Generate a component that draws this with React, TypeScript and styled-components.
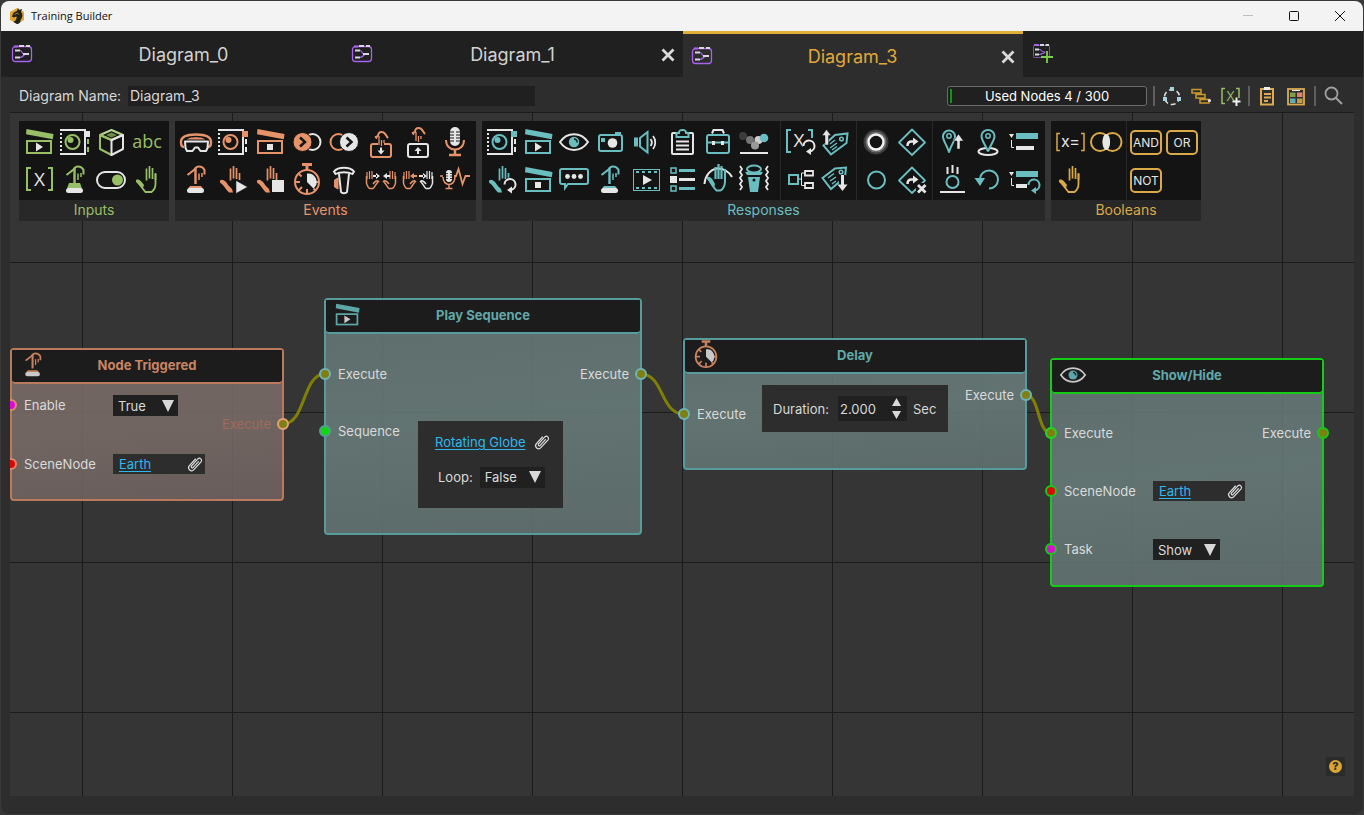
import React, { useState } from "react";
import styled, { createGlobalStyle } from "styled-components";

const GREEN = "#98be66";
const ORANGE = "#e6936a";
const TEAL = "#6abec0";
const GOLD = "#dba947";
const WHITE = "#e6e6e6";
const PURPLE = "#a862f0";
const INK = "#141414";

const Global = createGlobalStyle`
  *, *::before, *::after { box-sizing: border-box; }
  body {
    margin: 0;
    background: #383838;
    color: #d8d8d8;
    font: 13px/20px Inter, "Liberation Sans", sans-serif;
  }
  button, input, select { font: inherit; color: inherit; margin: 0; padding: 0; border: 0; border-radius: 0; background: none; }
  svg { display: block; overflow: visible; }
`;

/* ---------- icons ---------- */

type Tone = { c: string };

const Svg = ({ size = 30, children }: { size?: number; children: React.ReactNode }) => (
  <svg width={size} height={size} viewBox={`0 0 ${size} ${size}`} fill="none" aria-hidden="true">
    {children}
  </svg>
);

const Slate = ({ c, stop }: Tone & { stop?: boolean }) => (
  <Svg>
    <path d="M2.5 2 29.5 7 28.8 12.3 2 7.3Z" fill={c} />
    <rect x="3" y="14" width="24" height="12" stroke={c} strokeWidth="2" />
    {stop ? <rect x="12" y="17" width="6" height="6" fill={WHITE} /> : <path d="M12 15.5 19 20 12 24.5Z" fill={WHITE} />}
  </Svg>
);

const SceneEye = ({ c, corner = c, dash = WHITE }: Tone & { corner?: string; dash?: string }) => (
  <Svg>
    <path d="M0 3H25V27H0" stroke={WHITE} strokeWidth="2" />
    <path d="M1 6V26" stroke={WHITE} strokeWidth="2" strokeDasharray="2 2" />
    <path d="M28 12V28" stroke={dash} strokeWidth="2" strokeDasharray="5 3" />
    <rect x="24" y="4" width="6" height="6" fill={corner} />
    <circle cx="12.5" cy="15" r="7" stroke={c} strokeWidth="2" />
    <circle cx="10.5" cy="13" r="3" fill={c} />
  </Svg>
);

const Cube = ({ c }: Tone) => (
  <Svg>
    <path d="M4 8 15.5 3 27 8 15.5 13Z" stroke="#b9d394" strokeWidth="2" strokeLinejoin="round" />
    <path d="M10 8 15.5 5.5 21 8 15.5 10.5Z" fill="#6c8a47" />
    <path d="M15.5 28 4 22V8L15.5 13" stroke={c} strokeWidth="2" strokeLinejoin="round" />
    <path d="M15.5 13 27 8V22L15.5 28Z" stroke={WHITE} strokeWidth="2" strokeLinejoin="round" />
  </Svg>
);

const Abc = ({ c }: Tone) => (
  <Svg>
    <text x="15" y="21" fill={c} textAnchor="middle" fontSize="18" fontFamily='"Open Sans", sans-serif'>abc</text>
  </Svg>
);

const Brackets = ({ c }: Tone) => (
  <Svg>
    <path d="M7 3H3V25H7M24 3H28V25H24" stroke={c} strokeWidth="2" />
    <text x="15.5" y="21" fill={WHITE} textAnchor="middle" fontSize="19" fontFamily='"Open Sans", sans-serif'>X</text>
  </Svg>
);

const Finger = ({ c }: Tone) => (
  <g stroke={c}>
    <path d="M6.5 10 13.500 4.500C14.500 2.500 16 1.500 18 1.500 21 1.500 22.500 3 23.500 5V9.500" strokeWidth="2" />
    <path d="M14.500 3V19" strokeWidth="2.400" />
    <path d="M18 8.500V15M21 8V12" strokeWidth="1.500" />
  </g>
);

const Trigger = ({ c, wide }: Tone & { wide?: boolean }) => (
  <Svg>
    <Finger c={c} />
    {wide ? <path d="M9 18H20L22 23.5H7Z" fill={c} /> : <path d="M9 21H20L22 23.5H7Z" fill={c} />}
    <rect x="6" y="23" width="17" height="5" rx="2.5" fill={WHITE} />
  </Svg>
);

const Toggle = ({ c }: Tone) => (
  <Svg>
    <rect x="1" y="7" width="28" height="16" rx="8" stroke={WHITE} strokeWidth="2" />
    <circle cx="21.5" cy="15" r="5.5" fill={c} />
  </Svg>
);

const Fingers = ({ c, dx = 0 }: Tone & { dx?: number }) => (
  <path d="M14.5 3.5V15.5M17.500 1V13.500M20.500 3V14M23.500 8V15" stroke={c} strokeWidth="1.7" transform={`translate(${dx} 0)`} />
);

const Hand = ({ c }: Tone) => (
  <Svg>
    <Fingers c={c} />
    <path d="M23.5 9V19C23.5 23 21.500 25.500 19.500 27H13.500C11 24.500 9.500 21 5 16.500" stroke={c} strokeWidth="1.8" />
    <path d="M4 15C6.500 13.500 9 15.500 12 20L11 23 9 22C7.500 19.500 6 18 4 17Z" fill={c} />
  </Svg>
);

const HandThumb = ({ c }: Tone) => (
  <>
    <Fingers c={c} dx={-2} />
    <path d="M2 15.5C5 13.5 7.5 16 10.5 20.5L14 24 15 27.5H11C8 25 6 20 2 17.5Z" fill={c} />
  </>
);

const HandPlay = ({ c }: Tone) => (
  <Svg>
    <HandThumb c={c} />
    <path d="M18 15.5 29.5 22 18 28.5Z" fill={WHITE} stroke={INK} strokeWidth="0.5" />
  </Svg>
);

const HandStop = ({ c }: Tone) => (
  <Svg>
    <HandThumb c={c} />
    <rect x="17" y="15" width="12" height="12" fill={WHITE} />
  </Svg>
);

const Loop = ({ c, x, y }: Tone & { x: number; y: number }) => (
  <g transform={`translate(${x} ${y})`}>
    <path d="M-5.5 0A5.5 5.5 0 1 1 1 5.4" stroke={c} strokeWidth="2" />
    <path d="M-3 5.5 2 2V9Z" fill={c} />
  </g>
);

const HandLoop = ({ c }: Tone) => (
  <Svg>
    <HandThumb c={c} />
    <circle cx="23" cy="20" r="7.5" fill={INK} />
    <Loop c={WHITE} x={23} y={19.5} />
  </Svg>
);

const Headset = ({ c }: Tone) => (
  <Svg>
    <path d="M3 20C0 20 0 17 0 15 0 10 6 7.5 15 7.5S30 10 30 15C30 17 30 20 27 20" stroke={c} strokeWidth="2.5" />
    <path d="M6 12.5C8 9.5 22 9.5 24 12.5Z" fill={c} />
    <path d="M4 14.5H27L26.5 21 25 24H19.5L17 20.5H14L11.5 24H6L4.5 21Z" stroke={WHITE} strokeWidth="2" strokeLinejoin="round" />
  </Svg>
);

const EnterCircle = ({ c, flip }: Tone & { flip?: boolean }) =>
  flip ? (
    <Svg>
      <circle cx="9.5" cy="15" r="8" stroke={c} strokeWidth="2" />
      <circle cx="20" cy="15" r="9.5" fill={WHITE} stroke={INK} />
      <path d="M17.5 10.5 22.5 15 17.5 19.5" stroke={INK} strokeWidth="2.5" />
    </Svg>
  ) : (
    <Svg>
      <circle cx="20.5" cy="15" r="8" stroke={WHITE} strokeWidth="2" />
      <circle cx="10.5" cy="15" r="9.5" fill={c} stroke={INK} />
      <path d="M8 10.5 13 15 8 19.5" stroke={INK} strokeWidth="2.5" />
    </Svg>
  );

const GrabBox = ({ c, up }: Tone & { up?: boolean }) => (
  <Svg>
    <rect x="5" y="17" width="20" height="13" rx="2" stroke={up ? WHITE : c} strokeWidth="2" />
    <rect x="12" y="15" width="6" height="4" fill={up ? "none" : INK} />
    <g transform={up ? "translate(0 -4)" : undefined} stroke={c}>
      <path d="M9 10.5 12 9C12 6 14 4.5 16 5 19 5 19.5 8 22 11" strokeWidth="2" />
      <path d="M10.5 12V9M13 18V9M15.5 19V13M18 16V13" strokeWidth="1.3" />
    </g>
    {up ? (
      <path d="M11.5 24 15 20 18.5 24H16V27H14V24Z" fill={WHITE} />
    ) : (
      <path d="M11.5 23.5 15 27.5 18.5 23.5H16V20.5H14V23.5Z" fill={WHITE} />
    )}
  </Svg>
);

const Mic = ({ c }: Tone) => (
  <Svg>
    <rect x="10" y="0" width="10" height="19" rx="5" fill={WHITE} />
    <path d="M10 5H14M16 5H20M10 8H14M16 8H20M10 11H14M16 11H20M10 14H14M16 14H20" stroke={INK} />
    <path d="M6 13C6 19 10 22.5 15 22.5S24 19 24 13" stroke={c} strokeWidth="2" />
    <path d="M15 22V27M9 28H21" stroke={c} strokeWidth="2.5" />
  </Svg>
);

const Stopwatch = ({ c }: Tone) => (
  <Svg>
    <circle cx="15" cy="17" r="12" stroke={c} strokeWidth="2" />
    <path d="M10 -0.5H20M15 0V5" stroke={c} strokeWidth="3" />
    <path d="M15 24V29M3 17H8M22.5 17H27M6.5 8.5 9.5 11.5M6.5 25.5 10 22M23.5 25.5 21.5 23.5" stroke={c} strokeWidth="2" />
    <path d="M15 17V8.5A8.5 8.5 0 0 1 21.5 23.5Z" fill={WHITE} />
  </Svg>
);

const Lever = ({ c }: Tone) => (
  <Svg>
    <path d="M9 13 5.5 15V22L9 24Z" fill={c} stroke={c} />
    <path d="M5 6.5C9 1.5 21 1.5 25 6.5L23.5 9C19 6.500 11 6.5 6.5 9Z" fill={INK} stroke={WHITE} strokeWidth="2" />
    <path d="M10 9 12 27C13 28.5 17 28.5 18 27L20 9" fill={INK} stroke={WHITE} strokeWidth="2" />
  </Svg>
);

const SmallHand = ({ c, x, flip }: Tone & { x: number; flip?: boolean }) => (
  <g transform={`translate(${x} 0)${flip ? " scale(-1 1)" : ""}`} stroke={c}>
    <path d="M1 7V14M3.5 6V14M6 6V14" strokeWidth="1.2" />
    <path d="M0.5 11V18C1 21 3 23.5 4 23.5H7C9 22 10 18.5 12.5 16.5 11 14.5 8.5 17 7 19" strokeWidth="1.5" />
  </g>
);

const TwoHands = ({ c, apart }: Tone & { apart?: boolean }) => (
  <Svg>
    <SmallHand c={c} x={0} />
    <SmallHand c={apart ? WHITE : c} x={30} flip />
    {apart ? (
      <>
        <path d="M11 8V14L7 11ZM10 10H14V12H10Z" fill={c} />
        <path d="M20 8V14L24 11ZM16 10H21V12H16Z" fill={WHITE} />
      </>
    ) : (
      <path d="M10 8V14L14 11ZM7 10H11V12H7ZM21 8V14L17 11ZM20 10H24V12H20Z" fill={WHITE} />
    )}
  </Svg>
);

const MicWave = ({ c }: Tone) => (
  <Svg>
    <rect x="6" y="5" width="6" height="12" rx="3" fill={WHITE} />
    <path d="M6 8.5H8M10 8.5H12M6 11H8M10 11H12M6 13.5H8M10 13.5H12" stroke={INK} strokeWidth="0.8" />
    <path d="M3 12C3 17 6 19.5 9 19.5S15 17 15 12M9 19V23M5.5 23.5H12.5M0 11H3" stroke={c} strokeWidth="1.5" />
    <path d="M14 11H16L18.5 4 22.5 19 25.5 11H30" stroke={c} strokeWidth="1.8" />
  </Svg>
);

const Eye = ({ c }: Tone) => (
  <Svg>
    <path d="M1 15C8 4.5 22 4.5 29 15 22 25.500 8 25.500 1 15Z" stroke={WHITE} strokeWidth="2" />
    <circle cx="15" cy="15" r="5.2" fill={c} />
    <path d="M15 12A3 3 0 0 1 18 15.5" stroke={INK} strokeWidth="1.5" />
  </Svg>
);

const Camera = ({ c }: Tone) => (
  <Svg>
    <rect x="4" y="8" width="23" height="16" rx="2" stroke={c} strokeWidth="2" />
    <rect x="20" y="5" width="6" height="2" fill={c} />
    <rect x="6" y="11" width="4" height="4" fill={c} />
    <circle cx="17.5" cy="16" r="4.8" fill={WHITE} />
  </Svg>
);

const Speaker = ({ c }: Tone) => (
  <Svg>
    <rect x="3" y="10.5" width="4" height="9" fill={c} />
    <path d="M9 11 16.5 5V25.5L9 19.5Z" stroke={c} strokeWidth="2" />
    <path d="M19.5 12C21 14 21 17 19.5 19M22 9C25 12.5 25 18.5 22 22" stroke={WHITE} strokeWidth="1.8" />
  </Svg>
);

const Clipboard = ({ c }: Tone) => (
  <Svg>
    <rect x="5" y="6" width="21" height="21" rx="1" stroke={WHITE} strokeWidth="2" />
    <path d="M9.5 10V6H12C12 3 13.5 3 15.5 3S19 3 19 6H21.5V10Z" fill={INK} stroke={c} strokeWidth="2" />
    <path d="M9 14.5H22M9 18.5H22M9 22.5H22" stroke={WHITE} strokeWidth="1.8" />
  </Svg>
);

const Toolbox = ({ c }: Tone) => (
  <Svg>
    <path d="M9 6.5 10.5 3H19.5L21 6.5" stroke={WHITE} strokeWidth="2" />
    <rect x="4" y="8" width="22" height="18" rx="2" stroke={c} strokeWidth="2" />
    <path d="M4 15.5H26" stroke={c} strokeWidth="2" />
    <rect x="9" y="14" width="3" height="4" fill={WHITE} />
    <rect x="18" y="14" width="3" height="4" fill={WHITE} />
  </Svg>
);

const Balls = ({ c }: Tone) => (
  <Svg>
    <circle cx="4" cy="9" r="4" fill="#3c3c3c" />
    <circle cx="11" cy="13" r="4" fill="#757575" />
    <circle cx="19.5" cy="13" r="4" fill="#cfcfcf" />
    <circle cx="16" cy="18.5" r="4" fill="#989898" />
    <circle cx="25" cy="11" r="4.3" fill={c} />
    <path d="M1 26H29" stroke={WHITE} strokeWidth="2" />
  </Svg>
);

const Speech = ({ c }: Tone) => (
  <Svg>
    <path d="M3 4H27Q29 4 29 6V17Q29 19 27 19H9L6 23V19H3Q1 19 1 17V6Q1 4 3 4Z" stroke={c} strokeWidth="2" />
    <circle cx="8.5" cy="11.5" r="2.4" fill={WHITE} />
    <circle cx="15" cy="11.5" r="2.4" fill={WHITE} />
    <circle cx="21.5" cy="11.5" r="2.4" fill={WHITE} />
  </Svg>
);

const Film = ({ c }: Tone) => (
  <Svg>
    <rect x="2.5" y="4.5" width="26" height="21" stroke={c} />
    <path d="M5 7H27M5 23H27" stroke={c} strokeWidth="2" strokeDasharray="3 3" />
    <path d="M12 10 21 15 12 20Z" fill={WHITE} />
  </Svg>
);

const Checklist = ({ c }: Tone) => (
  <Svg>
    <path d="M4 3H9V8H4ZM4 21H9V26H4Z" stroke={c} strokeWidth="1.5" />
    <path d="M12 5.5H28M12 23.5H28" stroke={c} strokeWidth="3" />
    <path d="M12 14.5H28" stroke={WHITE} strokeWidth="3" />
    <rect x="3" y="11" width="7" height="7" fill={WHITE} />
  </Svg>
);

const HandArc = ({ c }: Tone) => (
  <Svg>
    <path d="M1.5 19C2 11 7 4.5 14 3.5 20 3 26 6.5 29 12" stroke={WHITE} strokeWidth="2" />
    <path d="M12.5 2V14M15.5 -1V14M18.5 1V14" stroke={c} strokeWidth="2.2" />
    <path d="M4 12C7.500 11 9.500 14 12 19L11 23C9 20 7 17 4 14Z" fill={c} />
    <path d="M22 4V16C22 20 20 24 17.500 25.5H13.500C11 23.500 8 18 5 13.500" stroke={c} strokeWidth="2" />
  </Svg>
);

const ShakeBin = ({ c }: Tone) => (
  <Svg>
    <path d="M1 1 3 4 1 7 3 10 1 13 3 16 1 19 3 22 1 25M29 1 27 4 29 7 27 10 29 13 27 16 29 19 27 22 29 25" stroke={WHITE} strokeWidth="1.8" />
    <ellipse cx="15" cy="4" rx="7" ry="3.5" stroke={c} strokeWidth="2" />
    <path d="M6 7H24L22 10H8Z" fill={c} />
    <path d="M9 12H21L19 27H11Z" fill={c} />
    <circle cx="15" cy="15" r="1.5" fill={INK} />
  </Svg>
);

const BracketsLoop = ({ c }: Tone) => (
  <Svg>
    <path d="M6 3H2V25H6M23 3H27V11" stroke={c} strokeWidth="2" />
    <text x="14" y="20" fill={WHITE} textAnchor="middle" fontSize="19" fontFamily='"Open Sans", sans-serif'>X</text>
    <circle cx="24" cy="19" r="6.5" fill={INK} />
    <Loop c={WHITE} x={24} y={19} />
  </Svg>
);

const Tag = ({ c, down }: Tone & { down?: boolean }) => (
  <Svg>
    {down ? (
      <>
        <path d="M1.5 13 14 3.5 25 2.5 24 12 10 24Z" stroke={c} strokeWidth="2" />
        <circle cx="20" cy="7" r="1.8" stroke={c} strokeWidth="1.5" />
        <path d="M7 13 13 8.5M9 16 15 12M11 19 15 16" stroke={c} strokeWidth="1.5" />
        <rect x="18" y="10" width="7" height="10" fill={INK} />
        <path d="M16.5 19.5H20V10H23V19.5H26.5L21.5 26Z" fill={WHITE} />
      </>
    ) : (
      <>
        <path d="M2.5 18.5 14 8 26.5 6.5 25.5 16 10 27.5Z" stroke={c} strokeWidth="2" />
        <circle cx="20.5" cy="12" r="1.8" stroke={c} strokeWidth="1.5" />
        <path d="M9 17 14 13M9 21 16 16M11 23 16 19.5" stroke={c} strokeWidth="1.5" />
        <path d="M1 8.5 5.5 2.5 10 8.5H7.5V18H4V8.5Z" fill={WHITE} stroke={INK} strokeWidth="0.5" />
      </>
    )}
  </Svg>
);

const Tree = ({ c }: Tone) => (
  <Svg>
    <path d="M13 14H16M20 8H16.5V20.5H20" stroke={WHITE} />
    <rect x="4" y="10" width="9" height="9" stroke={c} strokeWidth="2" />
    <path d="M20 6H28V10.5H20ZM20 18H28V23H20Z" stroke={WHITE} strokeWidth="1.8" />
  </Svg>
);

const Glow = () => (
  <Svg>
    <circle cx="15" cy="15" r="12.5" fill="#3d3d3d" />
    <circle cx="15" cy="15" r="10.5" fill="#6e6e6e" />
    <circle cx="15" cy="15" r="7.5" fill={INK} stroke="#f2f2f2" strokeWidth="2.5" />
  </Svg>
);

const Ring = ({ c }: Tone) => (
  <Svg>
    <circle cx="15.5" cy="15" r="8.5" stroke={c} strokeWidth="2" />
  </Svg>
);

const Detour = ({ c, cancel }: Tone & { cancel?: boolean }) => (
  <Svg>
    <path d="M15 2.5 28 15.5 15 28 2 15.5Z" stroke={c} strokeWidth="1.8" strokeLinejoin="round" />
    <path d="M10.5 19C10.5 16 11.5 14.5 14.5 14.5H16.500" stroke={WHITE} strokeWidth="2.5" />
    <path d="M16 10.5 21.500 14.500 16 18.5Z" fill={WHITE} />
    {cancel && (
      <>
        <rect x="19" y="18" width="11" height="11" fill={INK} />
        <path d="M21 20 28.5 27.5M28.5 20 21 27.5" stroke={WHITE} strokeWidth="2.8" />
      </>
    )}
  </Svg>
);

const PinUp = ({ c }: Tone) => (
  <Svg>
    <path d="M12 25.5C11 20 6 14 6 9.5A6 6 0 0 1 18 9.5C18 14 13 20 12 25.5Z" stroke={c} strokeWidth="2" />
    <circle cx="12" cy="9" r="2.2" stroke={c} strokeWidth="1.5" />
    <path d="M16.5 14 21.5 7 26.5 14H23V22H20V14Z" fill={WHITE} stroke={INK} strokeWidth="0.5" />
  </Svg>
);

const PinSpot = ({ c }: Tone) => (
  <Svg>
    <ellipse cx="15" cy="24.5" rx="9.5" ry="3.5" stroke={WHITE} strokeWidth="2" />
    <path d="M15 24.5C14 20 8.5 14 8.5 9A6.5 6 0 0 1 21.5 9C21.5 14 16 20 15 24.5Z" fill={INK} stroke={c} strokeWidth="2" />
    <circle cx="15" cy="9" r="2.2" stroke={c} strokeWidth="1.5" />
  </Svg>
);

const Steps = ({ c, loop }: Tone & { loop?: boolean }) => (
  <Svg>
    <path d="M0 7H5L2.5 11Z" fill={WHITE} />
    <path d="M2.5 13V20.5H5" stroke={WHITE} />
    <rect x="7" y="6" width="22" height="6" fill={c} />
    <rect x="7" y="19" width={loop ? 11 : 18} height="4" fill={WHITE} />
    {loop && <Loop c={c} x={25} y={20} />}
  </Svg>
);

const BallDrop = ({ c }: Tone) => (
  <Svg>
    <path d="M10.5 2V9M15.5 0V8M20.5 2V9" stroke={WHITE} strokeWidth="2" />
    <circle cx="15.5" cy="17" r="6" stroke={c} strokeWidth="2" />
    <path d="M3 27H28" stroke={WHITE} strokeWidth="2" />
  </Svg>
);

const Undo = ({ c }: Tone) => (
  <Svg>
    <path d="M7 14A9 9 0 1 1 16 23.5" stroke={c} strokeWidth="2" />
    <path d="M1.5 13H12L7 21Z" fill={c} />
  </Svg>
);

const Compare = ({ c }: Tone) => (
  <Svg>
    <path d="M5 6.5H2V23.5H5M26 6.5H29V23.5H26" stroke={c} strokeWidth="1.5" />
    <text x="15.500" y="20" fill={WHITE} textAnchor="middle" fontSize="16" fontFamily="Inter, sans-serif">x=</text>
  </Svg>
);

const Venn = ({ c }: Tone) => (
  <Svg>
    <circle cx="9" cy="15" r="9" stroke={c} strokeWidth="2" />
    <circle cx="21.5" cy="15" r="9" stroke={c} strokeWidth="2" />
    <ellipse cx="15.300" cy="15" rx="3.800" ry="8" fill={WHITE} />
  </Svg>
);

const Gate = ({ c, word }: Tone & { word: string }) => (
  <Svg>
    <rect x="0" y="4" width="30" height="23" rx="4" stroke={c} strokeWidth="2" />
    <text x="15" y="20" fill={WHITE} textAnchor="middle" fontSize="12" fontFamily="Inter, sans-serif">{word}</text>
  </Svg>
);

const DiagramIcon = ({ add }: { add?: boolean }) => (
  <Svg size={20}>
    <rect x="0.5" y="1.5" width={add ? 16 : 19} height={add ? 12 : 15} rx={add ? 1 : 3} stroke={PURPLE} strokeWidth={add ? 1 : 1.3} opacity={add ? 0.7 : 1} />
    <path d={add ? "M1 1H6" : "M2 1.500H6"} stroke={PURPLE} strokeWidth="2" />
    <path d={add ? "M7 1H11M12.5 1H16" : "M7 1H12M14 1H18"} stroke="#d8d8d8" strokeWidth="1.8" />
    <path d={add ? "M2 5.5H6M2 10.5H6" : "M3 5.500H8M3 12.500H8"} stroke="#d8d8d8" strokeWidth="1.8" />
    <path d={add ? "M6 5.5C9 5.5 8 8 11 8S8 10.5 6 10.5" : "M8 5.500C10 5.500 10 9 12 9S10 12.500 8 12.500"} stroke={PURPLE} strokeWidth="1.2" />
    {!add && <path d="M11 9H17" stroke="#d8d8d8" strokeWidth="1.8" />}
    {add && <path d="M14 7V19M8 13H20" stroke="#7ad14a" strokeWidth="1.8" />}
  </Svg>
);

const CrossIcon = () => (
  <Svg size={14}>
    <path d="M1.5 1.5 12.5 12.5M12.5 1.5 1.5 12.5" stroke="#dadada" strokeWidth="2.8" />
  </Svg>
);

const ClipIcon = () => (
  <Svg size={16}>
    <g transform="rotate(42 8 8)" stroke="#dedede" strokeWidth="1.2" strokeLinecap="round">
      <path d="M5 4V13A3 3 0 0 0 11 13V2A2.200 2.200 0 0 0 6.700 2V12A1.200 1.200 0 0 0 9 12V4" />
    </g>
  </Svg>
);

const LogoIcon = () => (
  <Svg size={16}>
    <path d="M8 0 15 4V12L8 16 1 12V4Z" fill="#e0a72e" />
    <path d="M9 0 10 2 13 1 12 4C14 6 14 9 11.5 12 12 14 10 16 8 16L4.5 14C7 12.5 8 10.5 7.5 8.5L4.5 9.5 3 8.5C3.5 5.5 5.5 3.5 8 3Z" fill="#222" />
    <path d="M5.5 6.5 8.5 5 9.5 6.5" stroke="#e0a72e" strokeWidth="0.7" />
  </Svg>
);

/* ---------- window frame ---------- */

const Window = styled.div`
  display: flex;
  flex-direction: column;
  min-height: calc(100vh - 2px);
  margin: 1px;
  border-radius: 8px;
  overflow: hidden;
  background: #2d2d2d;
`;

const TitleBar = styled.header`
  display: flex;
  align-items: center;
  height: 30px;
  padding-left: 8px;
  background: #f3f3f3;
  color: #111;
`;

const WindowTitle = styled.h1`
  flex: 1;
  margin: 0 0 0 6px;
  font: 400 11px/16px "Open Sans", "Noto Sans", sans-serif;
`;

const WindowButton = styled.button`
  display: grid;
  place-items: center;
  width: 46px;
  height: 30px;
`;

const TabBar = styled.nav`
  display: flex;
  align-items: stretch;
  height: 46px;
  padding-left: 2px;
  background: #202020;
`;

const Tab = styled.div<{ $active?: boolean }>`
  display: flex;
  align-items: center;
  flex: 0 1 340px;
  min-width: 0;
  padding: 2px 8px 0 9px;
  border-top: ${(p) => (p.$active ? "3px solid #e0b036" : "0")};
  background: ${(p) => (p.$active ? "#2d2d2d" : "transparent")};
`;

const TabLabel = styled.button<{ $active?: boolean }>`
  flex: 1;
  font-size: 18px;
  line-height: 24px;
  color: ${(p) => (p.$active ? "#e0a93a" : "#d2d2d2")};
`;

const TabClose = styled.button`
  display: flex;
  justify-content: flex-end;
  width: 22px;
`;

const AddTab = styled.button`
  padding: 0 10px;
`;

const ToolBar = styled.div`
  display: flex;
  padding: 9px 12px 6px 18px;
`;

const NameLabel = styled.label`
  flex: 0 0 109px;
  font-size: 14px;
  white-space: nowrap;
`;

const NameInput = styled.input`
  flex: 0 1 407px;
  min-width: 0;
  height: 20px;
  padding: 0 2px;
  background: #202020;
  font-size: 14px;
`;

const Usage = styled.div`
  position: relative;
  flex: 0 0 200px;
  height: 20px;
  margin: 0 6px 0 auto;
  border: 1px solid #6c6c6c;
  border-radius: 3px;
  background: #202020;
  color: #fff;
  line-height: 18px;
  text-align: center;

  &::before {
    content: "";
    position: absolute;
    left: 2px;
    top: 2px;
    bottom: 2px;
    width: 2px;
    background: #0b9a0b;
  }
`;

const ToolGroup = styled.div`
  display: flex;
  gap: 9px;
  padding: 0 8px 0 7px;
  border-left: 2px solid #5e5e5e;
`;

const ToolButton = styled.button`
  width: 20px;
  height: 20px;
`;

/* ---------- canvas and palette ---------- */

const Canvas = styled.main`
  position: relative;
  flex: 1;
  min-height: 480px;
  margin: 0 9px 18px;
  padding: 9px;
  overflow: hidden;
  background-color: #353535;
  background-image: linear-gradient(to right, #1b1b1b 1px, transparent 1px), linear-gradient(to bottom, #1b1b1b 1px, transparent 1px);
  background-size: 150px 150px;
  background-position: 72px 0;
`;

const Palette = styled.div`
  position: relative;
  z-index: 2;
  display: flex;
  gap: 6px;
`;

const PaletteGroup = styled.section`
  background: #282828;
`;

const Shelves = styled.div`
  display: flex;
  gap: 1px;
`;

const Shelf = styled.div<{ $columns: number; $cell: number; $width: number; $inset: number }>`
  display: grid;
  grid-template-columns: repeat(${(p) => p.$columns}, ${(p) => p.$cell}px);
  grid-auto-rows: 38px;
  width: ${(p) => p.$width}px;
  height: 79px;
  padding: 2px 0 0 ${(p) => p.$inset}px;
  background: ${INK};
`;

const PaletteButton = styled.button`
  display: grid;
  place-items: center;
`;

const PaletteLabel = styled.h2<{ $color: string }>`
  margin: 0;
  color: ${(p) => p.$color};
  font-size: 14px;
  font-weight: 400;
  line-height: 20px;
  height: 21px;
  text-align: center;
`;

const Wires = styled.svg`
  position: absolute;
  inset: 0;
  width: 100%;
  height: 100%;
  z-index: 1;
  pointer-events: none;
`;

const HelpButton = styled.button`
  position: absolute;
  right: 9px;
  bottom: 20px;
  display: grid;
  place-items: center;
  width: 19px;
  height: 19px;
  background: #2b2b2b;
`;

const HelpDot = styled.span`
  width: 13px;
  height: 13px;
  border-radius: 50%;
  background: #d9a632;
  color: #2b2b2b;
  font-size: 11px;
  font-weight: 800;
  line-height: 13px;
`;

/* ---------- nodes ---------- */

const NodeCard = styled.article<{ $x: number; $y: number; $w: number; $h: number; $line: string; $fill: string }>`
  position: absolute;
  left: ${(p) => p.$x}px;
  top: ${(p) => p.$y}px;
  width: ${(p) => p.$w}px;
  height: ${(p) => p.$h}px;
  display: flex;
  flex-direction: column;
  border: 2px solid ${(p) => p.$line};
  border-radius: 4px;
  background: ${(p) => p.$fill};
`;

const NodeHead = styled.div<{ $line: string; $ink: string }>`
  display: grid;
  grid-template-columns: 42px 1fr 42px;
  align-items: center;
  justify-items: center;
  flex: 0 0 34px;
  padding-bottom: 2px;
  border-bottom: 2px solid ${(p) => p.$line};
  border-radius: 0 0 4px 4px;
  background: rgba(26, 26, 26, 0.97);
  color: ${(p) => p.$ink};

  svg {
    width: 26px;
    height: 26px;
    opacity: 0.85;
  }
`;

const NodeTitle = styled.h3`
  margin: 0;
  font-size: 13px;
  font-weight: 700;
  line-height: 20px;
`;

const NodeBody = styled.div`
  display: flex;
  flex: 1;
`;

const Ports = styled.div<{ $top: number; $gap?: number; $end?: boolean }>`
  display: flex;
  flex-direction: column;
  gap: ${(p) => p.$gap ?? 0}px;
  padding-top: ${(p) => p.$top}px;
  margin-left: ${(p) => (p.$end ? "auto" : "0")};
`;

const PortRow = styled.div<{ $end?: boolean; $dim?: boolean }>`
  position: relative;
  display: flex;
  align-items: flex-start;
  height: 20px;
  padding: ${(p) => (p.$end ? "0 11px 0 0" : "0 0 0 12px")};
  color: ${(p) => (p.$dim ? "#a3695a" : "#dadada")};
`;

const Port = styled.span<{ $fill: string; $ring: string; $end?: boolean }>`
  position: absolute;
  z-index: 2;
  top: 4px;
  ${(p) => (p.$end ? "right" : "left")}: -7px;
  width: 12px;
  height: 12px;
  border: 2px solid ${(p) => p.$ring};
  border-radius: 50%;
  background: ${(p) => p.$fill};
`;

const PortLabel = styled.label<{ $w: number }>`
  flex: 0 0 ${(p) => p.$w}px;
`;

const SelectBox = styled.span<{ $w: number }>`
  display: grid;
  align-items: center;
  width: ${(p) => p.$w}px;
  height: 21px;
  background: #202020;

  > * {
    grid-area: 1 / 1;
  }

  svg {
    justify-self: end;
    margin-right: 4px;
    pointer-events: none;
  }
`;

const Select = styled.select`
  appearance: none;
  width: 100%;
  height: 21px;
  padding: 0 5px;
  color: #dadada;
`;

const AssetField = styled.span`
  display: flex;
  align-items: center;
  justify-content: space-between;
  width: 92px;
  height: 20px;
  padding: 0 2px 0 6px;
  background: #2d2d2d;
`;

const AssetLink = styled.a<{ $w?: number }>`
  width: ${(p) => (p.$w ? `${p.$w}px` : "auto")};
  overflow: hidden;
  color: #2fb8ee;
  white-space: nowrap;
  text-underline-offset: 2px;
`;

const Panel = styled.div`
  background: #2d2d2d;
`;

const SequencePanel = styled(Panel)`
  display: flex;
  flex-direction: column;
  gap: 15px;
  width: 145px;
  height: 87px;
  padding: 11px 12px 0 17px;
`;

const PanelRow = styled.div`
  display: flex;
  align-items: center;
  height: 20px;
  gap: 7px;
`;

const LoopRow = styled(PanelRow)`
  padding-left: 3px;
`;

const LoopLabel = styled.label`
  flex: 0 0 33px;
`;

const DelayPanel = styled(Panel)`
  display: flex;
  align-items: center;
  width: 186px;
  height: 47px;
  margin: 11px 0 0 9px;
  padding: 0 11px;
  white-space: nowrap;
`;

const DurationLabel = styled.label`
  flex: 0 0 65px;
`;

const Spinner = styled.span`
  display: flex;
  align-items: center;
  width: 69px;
  height: 25px;
  margin-right: 6px;
  background: #202020;

  input {
    width: 54px;
    padding: 0 2px;
    line-height: 20px;
  }
`;

const SpinButtons = styled.span`
  display: flex;
  flex-direction: column;
  gap: 5px;

  button {
    display: block;
    height: 8px;
  }
`;

const Down = () => (
  <svg width="12" height="12" viewBox="0 0 12 12" aria-hidden="true">
    <path d="M0 0H12L6 12Z" fill="#d8d8d8" />
  </svg>
);

type Choice = { id: string; value: string; options: string[]; width: number };

const Dropdown = ({ id, value, options, width }: Choice) => {
  const [current, setCurrent] = useState(value);
  return (
    <SelectBox $w={width}>
      <Select id={id} value={current} onChange={(e) => setCurrent(e.target.value)}>
        {options.map((o) => (
          <option key={o}>{o}</option>
        ))}
      </Select>
      <Down />
    </SelectBox>
  );
};

const Asset = ({ id, name }: { id: string; name: string }) => (
  <AssetField>
    <AssetLink id={id} href="#asset">{name}</AssetLink>
    <button aria-label="Attach asset"><ClipIcon /></button>
  </AssetField>
);

const OLIVE = "#7f7f14";
const MAGENTA = "#dc0cd4";
const RED = "#dc0808";
const LIME = "#10d810";
const TEAL_LINE = "#579b9b";
const TEAL_FILL = "linear-gradient(175deg, rgba(100,118,117,.87), rgba(104,124,122,.87) 50%, rgba(98,115,114,.87))";
const RUST_FILL = "linear-gradient(175deg, rgba(122,107,104,.87), rgba(122,108,104,.87) 50%, rgba(112,99,96,.87))";

type Item = [string, React.ReactNode];

const inputs: Item[] = [
  ["Sequence", <Slate c={GREEN} />],
  ["Scene node", <SceneEye c={GREEN} corner={WHITE} dash={GREEN} />],
  ["Object", <Cube c={GREEN} />],
  ["Text", <Abc c={GREEN} />],
  ["Variable", <Brackets c={GREEN} />],
  ["Trigger", <Trigger c={GREEN} wide />],
  ["Toggle", <Toggle c={GREEN} />],
  ["Hand", <Hand c={GREEN} />],
];

const events: Item[] = [
  ["Headset", <Headset c={ORANGE} />],
  ["Node seen", <SceneEye c={ORANGE} />],
  ["Sequence ended", <Slate c={ORANGE} stop />],
  ["Enter", <EnterCircle c={ORANGE} />],
  ["Exit", <EnterCircle c={ORANGE} flip />],
  ["Placed", <GrabBox c={ORANGE} />],
  ["Picked", <GrabBox c={ORANGE} up />],
  ["Voice", <Mic c={ORANGE} />],
  ["Node triggered", <Trigger c={ORANGE} />],
  ["Gesture started", <HandPlay c={ORANGE} />],
  ["Gesture stopped", <HandStop c={ORANGE} />],
  ["Delay", <Stopwatch c={ORANGE} />],
  ["Lever", <Lever c={ORANGE} />],
  ["Hands together", <TwoHands c={ORANGE} />],
  ["Hands apart", <TwoHands c={ORANGE} apart />],
  ["Speech level", <MicWave c={ORANGE} />],
];

const responses: Item[] = [
  ["Node view", <SceneEye c={TEAL} />],
  ["Play sequence", <Slate c={TEAL} />],
  ["Show or hide", <Eye c={TEAL} />],
  ["Camera", <Camera c={TEAL} />],
  ["Sound", <Speaker c={TEAL} />],
  ["Checklist board", <Clipboard c={TEAL} />],
  ["Toolbox", <Toolbox c={TEAL} />],
  ["Motion", <Balls c={TEAL} />],
  ["Repeat gesture", <HandLoop c={TEAL} />],
  ["Stop sequence", <Slate c={TEAL} stop />],
  ["Message", <Speech c={TEAL} />],
  ["Trigger node", <Trigger c={TEAL} />],
  ["Video", <Film c={TEAL} />],
  ["List", <Checklist c={TEAL} />],
  ["Grab", <HandArc c={TEAL} />],
  ["Vibrate", <ShakeBin c={TEAL} />],
];

const variables: Item[] = [
  ["Set variable", <BracketsLoop c={TEAL} />],
  ["Add tag", <Tag c={TEAL} />],
  ["Hierarchy", <Tree c={TEAL} />],
  ["Remove tag", <Tag c={TEAL} down />],
];

const paths: Item[] = [
  ["Highlight", <Glow />],
  ["Guide", <Detour c={TEAL} />],
  ["No highlight", <Ring c={TEAL} />],
  ["Cancel guide", <Detour c={TEAL} cancel />],
];

const places: Item[] = [
  ["Move up", <PinUp c={TEAL} />],
  ["Teleport", <PinSpot c={TEAL} />],
  ["Steps", <Steps c={TEAL} />],
  ["Drop", <BallDrop c={TEAL} />],
  ["Undo", <Undo c={TEAL} />],
  ["Restart steps", <Steps c={TEAL} loop />],
];

const compare: Item[] = [
  ["Equals", <Compare c={GOLD} />],
  ["Overlap", <Venn c={GOLD} />],
  ["Hand test", <Hand c={GOLD} />],
];

const gates: Item[] = [
  ["And", <Gate c={GOLD} word="AND" />],
  ["Or", <Gate c={GOLD} word="OR" />],
  ["Not", <Gate c={GOLD} word="NOT" />],
];

type ShelfData = { items: Item[]; columns: number; width: number; cell?: number; inset?: number };

const palette: { label: string; color: string; shelves: ShelfData[] }[] = [
  { label: "Inputs", color: GREEN, shelves: [{ items: inputs, columns: 4, width: 150, inset: 2 }] },
  { label: "Events", color: ORANGE, shelves: [{ items: events, columns: 8, width: 301, cell: 37, inset: 2 }] },
  {
    label: "Responses",
    color: TEAL,
    shelves: [
      { items: responses, columns: 8, width: 298, inset: 2 },
      { items: variables, columns: 2, width: 75 },
      { items: paths, columns: 2, width: 75 },
      { items: places, columns: 3, width: 112 },
    ],
  },
  {
    label: "Booleans",
    color: GOLD,
    shelves: [
      { items: compare, columns: 2, width: 75 },
      { items: gates, columns: 2, width: 74 },
    ],
  },
];

export default function App() {
  const [name, setName] = useState("Diagram_3");
  const [duration, setDuration] = useState("2.000");
  const nudge = (d: number) => setDuration((v) => Math.max(0, Number(v) + d).toFixed(3));

  return (
    <>
      <Global />
      <Window>
        <TitleBar>
          <LogoIcon />
          <WindowTitle>Training Builder</WindowTitle>
          <WindowButton aria-label="Minimize">
            <Svg size={10}><path d="M0 4.5H10" stroke="#bcbcbc" /></Svg>
          </WindowButton>
          <WindowButton aria-label="Maximize">
            <Svg size={10}><rect x="0.5" y="0.5" width="9" height="9" rx="1" stroke="#111" /></Svg>
          </WindowButton>
          <WindowButton aria-label="Close">
            <Svg size={10}><path d="M0 0 10 10M10 0 0 10" stroke="#111" /></Svg>
          </WindowButton>
        </TitleBar>

        <TabBar>
          <Tab>
            <DiagramIcon />
            <TabLabel>Diagram_0</TabLabel>
          </Tab>
          <Tab>
            <DiagramIcon />
            <TabLabel>Diagram_1</TabLabel>
            <TabClose aria-label="Close Diagram_1"><CrossIcon /></TabClose>
          </Tab>
          <Tab $active>
            <DiagramIcon />
            <TabLabel $active>Diagram_3</TabLabel>
            <TabClose aria-label="Close Diagram_3"><CrossIcon /></TabClose>
          </Tab>
          <AddTab aria-label="Add diagram"><DiagramIcon add /></AddTab>
        </TabBar>

        <ToolBar>
          <NameLabel htmlFor="diagram-name">Diagram Name:</NameLabel>
          <NameInput id="diagram-name" value={name} onChange={(e) => setName(e.target.value)} />
          <Usage>Used Nodes 4 / 300</Usage>
          <ToolGroup>
            <ToolButton aria-label="Center nodes">
              <Svg size={20}>
                <circle cx="10" cy="11" r="7.5" stroke="#e0e0e0" strokeWidth="1.5" strokeDasharray="5 3" />
                <path d="M8 1H12V5H8ZM1 11H5V15H1ZM15 11H19V15H15Z" fill="#a9d3e0" />
              </Svg>
            </ToolButton>
            <ToolButton aria-label="Arrange nodes">
              <Svg size={20}>
                <path d="M1 3.5H10V7H1ZM5 8.5H14V12H5ZM9 13.5H18V17H9Z" fill="#2d2d2d" stroke="#c9982c" strokeWidth="1.5" />
                <circle cx="18.5" cy="14.5" r="1.5" fill="#e6e6e6" />
              </Svg>
            </ToolButton>
            <ToolButton aria-label="Add variable">
              <Svg size={20}>
                <path d="M5 2.5H2V17.5H5M16 2.5H19V12" stroke={GREEN} strokeWidth="1.5" />
                <text x="10.5" y="15" fill={GREEN} textAnchor="middle" fontSize="14" fontFamily='"Open Sans", sans-serif'>X</text>
                <path d="M16.5 11.5V20M12.5 15.5H20.5" stroke="#f0f0f0" strokeWidth="2" />
              </Svg>
            </ToolButton>
          </ToolGroup>
          <ToolGroup>
            <ToolButton aria-label="Notes">
              <Svg size={20}>
                <rect x="4" y="3" width="12" height="15.5" stroke="#dcaa50" strokeWidth="2" />
                <path d="M7 8H14M7 11.5H14M7 15H11" stroke="#dcaa50" strokeWidth="1.8" />
                <rect x="7" y="1" width="6" height="3" fill="#f0f0f0" />
              </Svg>
            </ToolButton>
            <ToolButton aria-label="Node library">
              <Svg size={20}>
                <rect x="2" y="3" width="16" height="15.5" stroke="#dcaa50" strokeWidth="1.8" />
                <path d="M6 4.5H14" stroke="#f0f0f0" strokeWidth="1.2" />
                <rect x="4" y="6.5" width="5.5" height="4.5" fill="#7f9c4a" />
                <rect x="11" y="6.5" width="5.5" height="4.5" fill="#e6806a" />
                <rect x="4" y="12.5" width="5.5" height="4.500" fill="#5fb0b4" />
                <rect x="11" y="12.5" width="5.5" height="4.500" fill="#c89a3e" />
              </Svg>
            </ToolButton>
          </ToolGroup>
          <ToolGroup>
            <ToolButton aria-label="Search">
              <Svg size={20}>
                <circle cx="8.5" cy="7.5" r="6" stroke="#a0a0a0" strokeWidth="1.8" />
                <path d="M13 12 19 18" stroke="#a0a0a0" strokeWidth="2" />
              </Svg>
            </ToolButton>
          </ToolGroup>
        </ToolBar>

        <Canvas>
          <Palette>
            {palette.map((g) => (
              <PaletteGroup key={g.label}>
                <Shelves>
                  {g.shelves.map((s, i) => (
                    <Shelf key={i} $columns={s.columns} $cell={s.cell ?? 36} $width={s.width} $inset={s.inset ?? 1}>
                      {s.items.map(([label, icon]) => (
                        <PaletteButton key={label} aria-label={label}>{icon}</PaletteButton>
                      ))}
                    </Shelf>
                  ))}
                </Shelves>
                <PaletteLabel $color={g.color}>{g.label}</PaletteLabel>
              </PaletteGroup>
            ))}
          </Palette>

          <NodeCard $x={0} $y={236} $w={274} $h={153} $line="#bb7a5e" $fill={RUST_FILL}>
            <NodeHead $line="#bb7a5e" $ink="#c98463">
              <Trigger c={ORANGE} />
              <NodeTitle>Node Triggered</NodeTitle>
            </NodeHead>
            <NodeBody>
              <Ports $top={11} $gap={39}>
                <PortRow>
                  <Port $fill={MAGENTA} $ring="#d98a66" />
                  <PortLabel $w={89} htmlFor="enable">Enable</PortLabel>
                  <Dropdown id="enable" value="True" options={["True", "False"]} width={65} />
                </PortRow>
                <PortRow>
                  <Port $fill={RED} $ring="#d98a66" />
                  <PortLabel $w={89} htmlFor="trigger-node">SceneNode</PortLabel>
                  <Asset id="trigger-node" name="Earth" />
                </PortRow>
              </Ports>
              <Ports $top={30} $end>
                <PortRow $end $dim>
                  Execute
                  <Port $fill={OLIVE} $ring="#e6a078" $end />
                </PortRow>
              </Ports>
            </NodeBody>
          </NodeCard>

          <NodeCard $x={314} $y={186} $w={318} $h={237} $line={TEAL_LINE} $fill={TEAL_FILL}>
            <NodeHead $line={TEAL_LINE} $ink="#62a8a9">
              <Slate c={TEAL} />
              <NodeTitle>Play Sequence</NodeTitle>
            </NodeHead>
            <NodeBody>
              <Ports $top={30} $gap={37}>
                <PortRow>
                  <Port $fill={OLIVE} $ring="#6fb4b5" />
                  Execute
                </PortRow>
                <PortRow>
                  <Port $fill={LIME} $ring={TEAL_LINE} />
                  <PortLabel $w={80} htmlFor="sequence">Sequence</PortLabel>
                  <SequencePanel>
                    <PanelRow>
                      <AssetLink id="sequence" href="#asset" $w={92}>Rotating Globe</AssetLink>
                      <button aria-label="Attach sequence"><ClipIcon /></button>
                    </PanelRow>
                    <LoopRow>
                      <LoopLabel htmlFor="loop">Loop:</LoopLabel>
                      <Dropdown id="loop" value="False" options={["True", "False"]} width={65} />
                    </LoopRow>
                  </SequencePanel>
                </PortRow>
              </Ports>
              <Ports $top={30} $end>
                <PortRow $end>
                  Execute
                  <Port $fill={OLIVE} $ring="#6fb4b5" $end />
                </PortRow>
              </Ports>
            </NodeBody>
          </NodeCard>

          <NodeCard $x={673} $y={226} $w={344} $h={132} $line={TEAL_LINE} $fill={TEAL_FILL}>
            <NodeHead $line={TEAL_LINE} $ink="#62a8a9">
              <Stopwatch c={ORANGE} />
              <NodeTitle>Delay</NodeTitle>
            </NodeHead>
            <NodeBody>
              <Ports $top={30}>
                <PortRow>
                  <Port $fill={OLIVE} $ring="#6fb4b5" />
                  <PortLabel as="span" $w={56}>Execute</PortLabel>
                </PortRow>
              </Ports>
              <DelayPanel>
                <DurationLabel htmlFor="duration">Duration:</DurationLabel>
                <Spinner>
                  <input id="duration" value={duration} onChange={(e) => setDuration(e.target.value)} />
                  <SpinButtons>
                    <button aria-label="Increase" onClick={() => nudge(0.5)}>
                      <svg width="9" height="8" viewBox="0 0 9 8"><path d="M0 8H9L4.5 0Z" fill="#d8d8d8" /></svg>
                    </button>
                    <button aria-label="Decrease" onClick={() => nudge(-0.5)}>
                      <svg width="9" height="8" viewBox="0 0 9 8"><path d="M0 0H9L4.5 8Z" fill="#d8d8d8" /></svg>
                    </button>
                  </SpinButtons>
                </Spinner>
                Sec
              </DelayPanel>
              <Ports $top={11} $end>
                <PortRow $end>
                  Execute
                  <Port $fill={OLIVE} $ring="#6fb4b5" $end />
                </PortRow>
              </Ports>
            </NodeBody>
          </NodeCard>

          <NodeCard $x={1040} $y={246} $w={274} $h={229} $line="#12cc16" $fill={TEAL_FILL}>
            <NodeHead $line="#12cc16" $ink="#62a8a9">
              <Eye c={TEAL} />
              <NodeTitle>Show/Hide</NodeTitle>
            </NodeHead>
            <NodeBody>
              <Ports $top={29} $gap={38}>
                <PortRow>
                  <Port $fill={OLIVE} $ring="#1cd820" />
                  Execute
                </PortRow>
                <PortRow>
                  <Port $fill={RED} $ring="#12cc16" />
                  <PortLabel $w={89} htmlFor="show-node">SceneNode</PortLabel>
                  <Asset id="show-node" name="Earth" />
                </PortRow>
                <PortRow>
                  <Port $fill={MAGENTA} $ring="#12cc16" />
                  <PortLabel $w={89} htmlFor="task">Task</PortLabel>
                  <Dropdown id="task" value="Show" options={["Show", "Hide"]} width={67} />
                </PortRow>
              </Ports>
              <Ports $top={29} $end>
                <PortRow $end>
                  Execute
                  <Port $fill={OLIVE} $ring="#12cc16" $end />
                </PortRow>
              </Ports>
            </NodeBody>
          </NodeCard>

          <Wires aria-hidden="true">
            <g fill="none" stroke="#808004" strokeWidth="3">
              <path d="M273 312C296 312 292 262 315 262" />
              <path d="M631 262C654 262 650 302 674 302" />
              <path d="M1016 283C1030 283 1027 321 1041 321" />
            </g>
          </Wires>

          <HelpButton aria-label="Help"><HelpDot>?</HelpDot></HelpButton>
        </Canvas>
      </Window>
    </>
  );
}
